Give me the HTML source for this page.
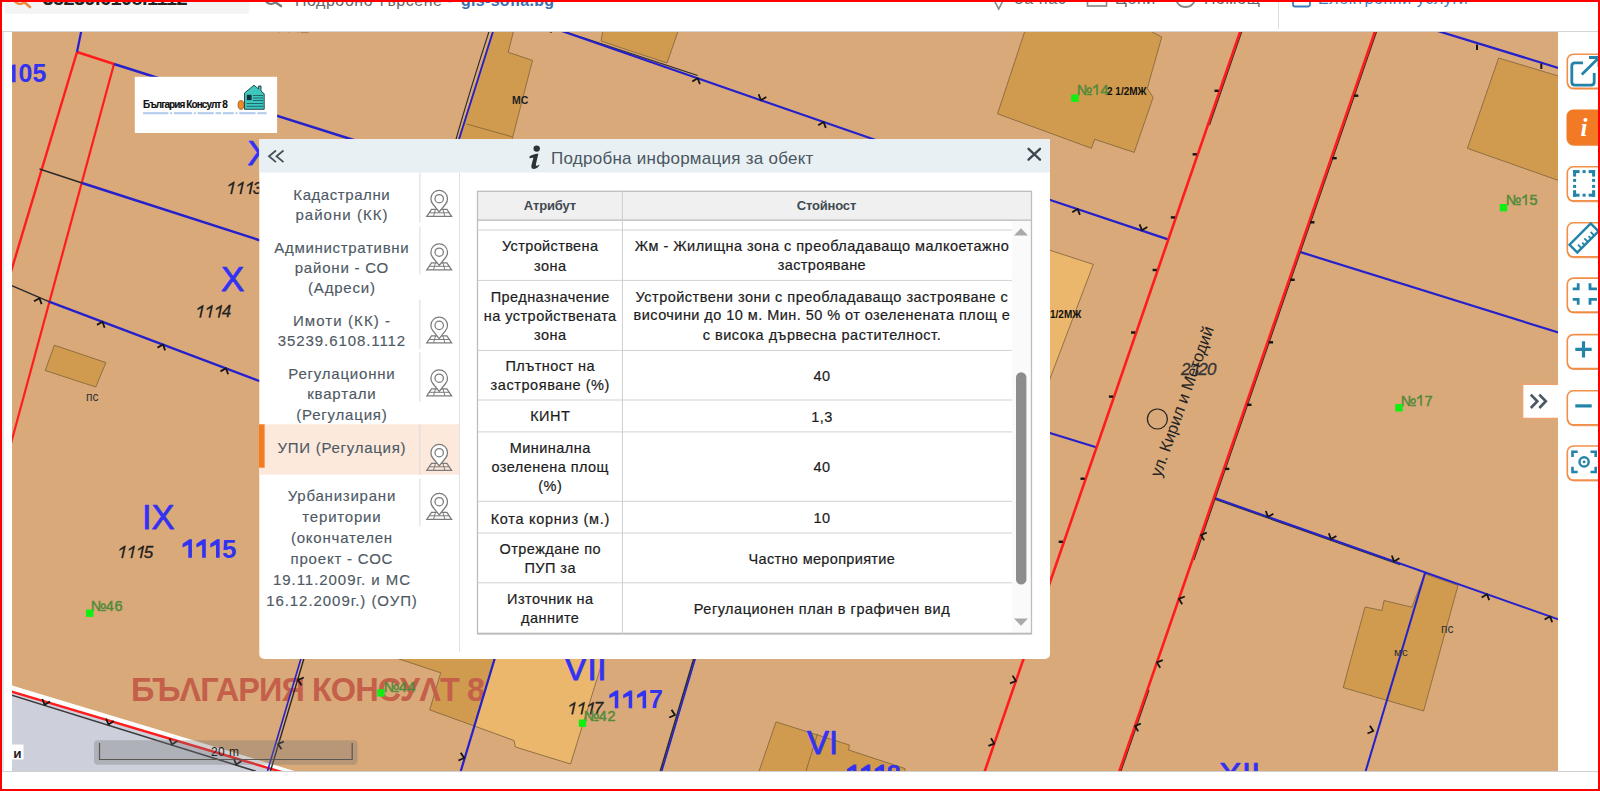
<!DOCTYPE html>
<html><head><meta charset="utf-8">
<style>
html,body{margin:0;padding:0;width:1600px;height:791px;overflow:hidden;background:#fff;font-family:"Liberation Sans",sans-serif;}
#frame{position:absolute;left:0;top:0;width:1596px;height:787px;border:2px solid #ff0000;z-index:100;pointer-events:none;}
#hdr{position:absolute;left:0;top:0;width:1600px;height:31px;background:#fff;border-bottom:1px solid #d6d6d6;overflow:hidden;}
#map{position:absolute;left:12px;top:32px;width:1546px;height:739px;overflow:hidden;background:#d9a97a;}
#map svg{position:absolute;left:0;top:0;}
#lstrip{position:absolute;left:2px;top:32px;width:1.5px;height:739px;background:#dfe8ea;}
#botline{position:absolute;left:2px;top:771px;width:1596px;height:1px;background:#d0d0d0;}
</style></head><body>
<div id="hdr"></div>
<div id="map"><svg width="1546" height="739" viewBox="12 32 1546 739">
<polygon points="0,681.8 306,774.5 0,774.5" fill="#ffffff"/>
<polygon points="0,688.1 290,774.5 0,774.5" fill="#cdcfdb"/>
<line x1="0.0" y1="688.1" x2="290.0" y2="774.5" stroke="#ff1c1c" stroke-width="2.4"/>
<line x1="0.0" y1="691.5" x2="256.0" y2="771.3" stroke="#3a3a3a" stroke-width="1.6"/>
<polyline points="42.3,699.0 44.7,704.8 50.0,701.4" fill="none" stroke="#151515" stroke-width="1.8" stroke-linejoin="round"/>
<polyline points="106.1,718.7 108.5,724.5 113.8,721.1" fill="none" stroke="#151515" stroke-width="1.8" stroke-linejoin="round"/>
<polyline points="169.6,738.7 172.0,744.5 177.3,741.1" fill="none" stroke="#151515" stroke-width="1.8" stroke-linejoin="round"/>
<polyline points="233.8,758.7 236.2,764.5 241.5,761.1" fill="none" stroke="#151515" stroke-width="1.8" stroke-linejoin="round"/>
<polygon points="54.4,345.2 105.9,362.6 95.8,387.0 45.2,370.5" fill="#d09b4e" stroke="#7d6237" stroke-width="0.8"/>
<polygon points="493.2,30.0 513.8,30.0 508.2,52.3 532.5,60.4 511.7,141.0 458.0,141.0" fill="#d09b4e" stroke="#7d6237" stroke-width="0.8"/>
<line x1="466.6" y1="124.0" x2="511.7" y2="136.7" stroke="#7d6237" stroke-width="0.8"/>
<polygon points="603.0,30.0 678.5,30.0 667.0,63.0 620.0,47.5 601.0,41.0" fill="#d09b4e" stroke="#7d6237" stroke-width="0.8"/>
<polygon points="1025.2,30.0 1148.1,30.0 1161.8,36.9 1147.3,88.3 1153.1,97.4 1134.2,152.4 1094.7,139.3 1091.5,148.3 997.5,113.8" fill="#d09b4e" stroke="#7d6237" stroke-width="0.8"/>
<polygon points="1498.6,58.0 1560.0,76.5 1560.0,181.0 1467.4,148.3" fill="#d09b4e" stroke="#7d6237" stroke-width="0.8"/>
<polygon points="1040.0,247.0 1093.3,264.4 1040.0,405.0" fill="#ebb76c" stroke="#7d6237" stroke-width="0.8"/>
<polygon points="1365.0,607.0 1382.0,610.5 1384.0,600.5 1412.0,607.2 1424.6,573.7 1458.0,585.4 1423.6,711.0 1343.2,687.6" fill="#d09b4e" stroke="#7d6237" stroke-width="0.8"/>
<polygon points="395.0,650.0 497.0,650.0 474.3,726.0 429.7,709.9 440.7,672.8 378.0,652.0" fill="#d09b4e" stroke="#7d6237" stroke-width="0.8"/>
<polygon points="497.0,650.0 606.0,650.0 570.5,764.0 515.4,747.0 514.0,740.5 474.3,726.0" fill="#ebb76c" stroke="#7d6237" stroke-width="0.8"/>
<polygon points="776.0,721.9 849.4,745.0 848.6,750.0 905.0,768.5 905.0,780.0 756.0,780.0" fill="#d09b4e" stroke="#7d6237" stroke-width="0.8"/>
<line x1="817.5" y1="733.8" x2="806.0" y2="771.0" stroke="#7d6237" stroke-width="0.8"/>
<text x="307.53" y="700.75" font-size="32.5" fill="#c4604a" letter-spacing="-0.932" text-anchor="middle" font-weight="bold" >БЪΛГАРИЯ КОНСУΛТ 8</text>
<line x1="77.0" y1="52.0" x2="10.0" y2="275.0" stroke="#ff1c1c" stroke-width="2.4"/>
<line x1="77.0" y1="52.0" x2="114.0" y2="64.0" stroke="#ff1c1c" stroke-width="2.6"/>
<line x1="114.0" y1="64.0" x2="10.0" y2="447.0" stroke="#ff1c1c" stroke-width="2.2"/>
<line x1="81.5" y1="30.0" x2="77.0" y2="52.0" stroke="#2420cc" stroke-width="2.2"/>
<line x1="114.0" y1="64.0" x2="360.0" y2="142.0" stroke="#2420cc" stroke-width="2.4"/>
<line x1="39.5" y1="169.0" x2="82.0" y2="183.0" stroke="#2a2a2a" stroke-width="1.4"/>
<line x1="82.0" y1="183.0" x2="262.0" y2="241.0" stroke="#2420cc" stroke-width="2.4"/>
<line x1="10.0" y1="285.0" x2="49.0" y2="301.6" stroke="#2a2a2a" stroke-width="1.4"/>
<line x1="49.0" y1="301.6" x2="262.0" y2="382.0" stroke="#2420cc" stroke-width="2.4"/>
<polyline points="41.6,304.1 39.5,298.2 34.0,301.3" fill="none" stroke="#151515" stroke-width="1.8" stroke-linejoin="round"/>
<polyline points="104.6,327.7 102.5,321.8 97.0,324.9" fill="none" stroke="#151515" stroke-width="1.8" stroke-linejoin="round"/>
<polyline points="165.1,350.4 163.0,344.5 157.5,347.6" fill="none" stroke="#151515" stroke-width="1.8" stroke-linejoin="round"/>
<polyline points="228.1,374.2 226.0,368.3 220.5,371.4" fill="none" stroke="#151515" stroke-width="1.8" stroke-linejoin="round"/>
<path d="M489.5,30 Q470,90 455.5,141" fill="none" stroke="#2a2a2a" stroke-width="1.1"/>
<line x1="493.5" y1="30.0" x2="458.5" y2="141.0" stroke="#2420cc" stroke-width="1.8"/>
<line x1="558.0" y1="29.5" x2="697.7" y2="75.5" stroke="#2a2a2a" stroke-width="1.2"/>
<line x1="556.0" y1="29.0" x2="880.0" y2="141.6" stroke="#2420cc" stroke-width="2.1"/>
<polyline points="699.9,84.1 697.7,78.3 692.3,81.5" fill="none" stroke="#151515" stroke-width="1.8" stroke-linejoin="round"/>
<polyline points="758.7,94.3 760.9,100.2 766.3,97.0" fill="none" stroke="#151515" stroke-width="1.8" stroke-linejoin="round"/>
<polyline points="825.8,127.9 823.6,122.0 818.2,125.2" fill="none" stroke="#151515" stroke-width="1.8" stroke-linejoin="round"/>
<circle cx="551.0" cy="31.5" r="1.3" fill="#151515"/>
<line x1="1434.5" y1="30.0" x2="1560.0" y2="68.4" stroke="#2420cc" stroke-width="2.2"/>
<path d="M1477,44.5 V50 M1541.3,63.5 V69" stroke="#151515" stroke-width="2"/>
<line x1="1045.0" y1="198.2" x2="1168.0" y2="239.4" stroke="#2420cc" stroke-width="2.2"/>
<polyline points="1079.9,214.8 1077.6,208.9 1072.2,212.2" fill="none" stroke="#151515" stroke-width="1.8" stroke-linejoin="round"/>
<polyline points="1139.6,224.3 1141.9,230.2 1147.3,226.9" fill="none" stroke="#151515" stroke-width="1.8" stroke-linejoin="round"/>
<line x1="1299.7" y1="251.9" x2="1560.0" y2="333.0" stroke="#2420cc" stroke-width="2.2"/>
<line x1="1045.0" y1="431.5" x2="1097.0" y2="447.5" stroke="#2420cc" stroke-width="2.2"/>
<line x1="1214.0" y1="499.0" x2="1400.0" y2="564.7" stroke="#2a2a2a" stroke-width="1.2"/>
<line x1="1214.0" y1="497.8" x2="1560.0" y2="620.0" stroke="#2420cc" stroke-width="2"/>
<polyline points="1265.8,511.0 1268.0,516.9 1273.4,513.7" fill="none" stroke="#151515" stroke-width="1.8" stroke-linejoin="round"/>
<polyline points="1328.8,533.2 1331.0,539.1 1336.4,535.9" fill="none" stroke="#151515" stroke-width="1.8" stroke-linejoin="round"/>
<polyline points="1391.8,555.5 1394.0,561.4 1399.4,558.2" fill="none" stroke="#151515" stroke-width="1.8" stroke-linejoin="round"/>
<polyline points="1489.2,600.1 1487.0,594.2 1481.6,597.4" fill="none" stroke="#151515" stroke-width="1.8" stroke-linejoin="round"/>
<polyline points="1552.2,622.3 1550.0,616.4 1544.6,619.6" fill="none" stroke="#151515" stroke-width="1.8" stroke-linejoin="round"/>
<line x1="1425.0" y1="573.0" x2="1363.0" y2="780.0" stroke="#2420cc" stroke-width="2"/>
<polyline points="1367.5,733.5 1373.3,731.0 1369.9,725.7" fill="none" stroke="#151515" stroke-width="1.8" stroke-linejoin="round"/>
<line x1="303.5" y1="650.0" x2="267.5" y2="771.0" stroke="#2420cc" stroke-width="1.6"/>
<line x1="306.5" y1="650.0" x2="270.5" y2="771.0" stroke="#2a2a2a" stroke-width="1.4"/>
<polyline points="303.8,677.5 298.0,680.0 301.5,685.3" fill="none" stroke="#151515" stroke-width="1.8" stroke-linejoin="round"/>
<polyline points="283.8,741.5 278.0,744.0 281.5,749.3" fill="none" stroke="#151515" stroke-width="1.8" stroke-linejoin="round"/>
<line x1="497.3" y1="650.0" x2="460.8" y2="771.0" stroke="#2420cc" stroke-width="2.2"/>
<polyline points="458.4,760.5 464.2,758.0 460.7,752.7" fill="none" stroke="#151515" stroke-width="1.8" stroke-linejoin="round"/>
<line x1="696.3" y1="650.0" x2="660.3" y2="771.0" stroke="#2a2a2a" stroke-width="1.5"/>
<line x1="697.8" y1="650.0" x2="661.8" y2="771.0" stroke="#2420cc" stroke-width="1.6"/>
<polyline points="669.2,717.5 675.0,715.0 671.5,709.7" fill="none" stroke="#151515" stroke-width="1.8" stroke-linejoin="round"/>
<line x1="1242.3" y1="30.0" x2="1209.5" y2="125.0" stroke="#2a2a2a" stroke-width="1.2"/>
<line x1="1240.7" y1="30.0" x2="981.7" y2="780.0" stroke="#ff1c1c" stroke-width="2.6"/>
<line x1="1377.1" y1="30.0" x2="1193.9" y2="560.0" stroke="#2a2a2a" stroke-width="1.2"/>
<line x1="1149.0" y1="690.0" x2="1117.9" y2="780.0" stroke="#2a2a2a" stroke-width="1.2"/>
<line x1="1375.5" y1="30.0" x2="1116.3" y2="780.0" stroke="#ff1c1c" stroke-width="2.6"/>
<line x1="1214.5" y1="90.8" x2="1218.7" y2="90.8" stroke="#151515" stroke-width="2.4"/>
<line x1="1192.6" y1="154.3" x2="1196.8" y2="154.3" stroke="#151515" stroke-width="2.4"/>
<line x1="1170.8" y1="217.4" x2="1175.0" y2="217.4" stroke="#151515" stroke-width="2.4"/>
<line x1="1152.6" y1="270.0" x2="1156.8" y2="270.0" stroke="#151515" stroke-width="2.4"/>
<line x1="1131.0" y1="332.5" x2="1135.2" y2="332.5" stroke="#151515" stroke-width="2.4"/>
<line x1="1108.9" y1="396.6" x2="1113.1" y2="396.6" stroke="#151515" stroke-width="2.4"/>
<line x1="1080.5" y1="478.7" x2="1084.7" y2="478.7" stroke="#151515" stroke-width="2.4"/>
<line x1="1058.7" y1="541.8" x2="1062.9" y2="541.8" stroke="#151515" stroke-width="2.4"/>
<line x1="1353.8" y1="95.7" x2="1358.3" y2="95.7" stroke="#151515" stroke-width="2.4"/>
<line x1="1332.2" y1="158.2" x2="1336.7" y2="158.2" stroke="#151515" stroke-width="2.4"/>
<line x1="1310.0" y1="222.3" x2="1314.5" y2="222.3" stroke="#151515" stroke-width="2.4"/>
<line x1="1290.2" y1="279.8" x2="1294.7" y2="279.8" stroke="#151515" stroke-width="2.4"/>
<line x1="1268.6" y1="342.3" x2="1273.1" y2="342.3" stroke="#151515" stroke-width="2.4"/>
<line x1="1247.0" y1="404.8" x2="1251.5" y2="404.8" stroke="#151515" stroke-width="2.4"/>
<line x1="1224.8" y1="468.9" x2="1229.3" y2="468.9" stroke="#151515" stroke-width="2.4"/>
<polyline points="1010.0,683.3 1015.9,681.0 1012.6,675.6" fill="none" stroke="#151515" stroke-width="1.8" stroke-linejoin="round"/>
<polyline points="988.4,745.9 994.2,743.6 991.0,738.2" fill="none" stroke="#151515" stroke-width="1.8" stroke-linejoin="round"/>
<polyline points="1206.8,532.7 1201.0,535.0 1204.2,540.4" fill="none" stroke="#151515" stroke-width="1.8" stroke-linejoin="round"/>
<polyline points="1184.8,596.5 1178.9,598.8 1182.2,604.2" fill="none" stroke="#151515" stroke-width="1.8" stroke-linejoin="round"/>
<polyline points="1162.8,660.1 1156.9,662.4 1160.2,667.8" fill="none" stroke="#151515" stroke-width="1.8" stroke-linejoin="round"/>
<polyline points="1140.8,723.7 1135.0,726.0 1138.2,731.4" fill="none" stroke="#151515" stroke-width="1.8" stroke-linejoin="round"/>
<circle cx="1157.4" cy="419" r="10" fill="none" stroke="#222" stroke-width="1.2"/>
<polygon points="1.70,82.30 -1.80,82.30 -1.80,69.80 -7.30,72.30 -7.30,68.80 -0.80,64.40 1.70,64.40" fill="#3232f2" stroke="#3232f2" stroke-width="0" stroke-linejoin="round"/>
<polygon points="15.60,82.30 12.10,82.30 12.10,69.80 6.60,72.30 6.60,68.80 13.10,64.40 15.60,64.40" fill="#3232f2" stroke="#3232f2" stroke-width="0" stroke-linejoin="round"/>
<text x="18.50" y="82.30" font-size="25" fill="#3232f2" stroke="#3232f2" stroke-width="0" font-weight="bold">0</text>
<text x="32.40" y="82.30" font-size="25" fill="#3232f2" stroke="#3232f2" stroke-width="0" font-weight="bold">5</text>
<text x="247.5" y="165.0" font-size="34.5" fill="#3232f2" stroke="#3232f2" stroke-width="0.75" stroke-linejoin="round">XI</text>
<text x="221.0" y="290.5" font-size="35" fill="#3232f2" stroke="#3232f2" stroke-width="0.75" stroke-linejoin="round">X</text>
<text x="142.0" y="528.7" font-size="34.5" fill="#3232f2" stroke="#3232f2" stroke-width="0.75" stroke-linejoin="round">IX</text>
<polygon points="191.94,557.80 188.30,557.80 188.30,544.80 182.58,547.40 182.58,543.76 189.34,539.18 191.94,539.18" fill="#3232f2" stroke="#3232f2" stroke-width="0" stroke-linejoin="round"/>
<polygon points="205.80,557.80 202.16,557.80 202.16,544.80 196.44,547.40 196.44,543.76 203.20,539.18 205.80,539.18" fill="#3232f2" stroke="#3232f2" stroke-width="0" stroke-linejoin="round"/>
<polygon points="219.65,557.80 216.01,557.80 216.01,544.80 210.29,547.40 210.29,543.76 217.05,539.18 219.65,539.18" fill="#3232f2" stroke="#3232f2" stroke-width="0" stroke-linejoin="round"/>
<text x="222.07" y="557.80" font-size="26" fill="#3232f2" stroke="#3232f2" stroke-width="0" font-weight="bold">5</text>
<text x="564.0" y="680.0" font-size="35" fill="#3232f2" stroke="#3232f2" stroke-width="0.75" stroke-linejoin="round">VII</text>
<polygon points="618.30,708.30 614.80,708.30 614.80,695.80 609.30,698.30 609.30,694.80 615.80,690.40 618.30,690.40" fill="#3232f2" stroke="#3232f2" stroke-width="0" stroke-linejoin="round"/>
<polygon points="632.20,708.30 628.70,708.30 628.70,695.80 623.20,698.30 623.20,694.80 629.70,690.40 632.20,690.40" fill="#3232f2" stroke="#3232f2" stroke-width="0" stroke-linejoin="round"/>
<polygon points="646.10,708.30 642.60,708.30 642.60,695.80 637.10,698.30 637.10,694.80 643.60,690.40 646.10,690.40" fill="#3232f2" stroke="#3232f2" stroke-width="0" stroke-linejoin="round"/>
<text x="649.00" y="708.30" font-size="25" fill="#3232f2" stroke="#3232f2" stroke-width="0" font-weight="bold">7</text>
<text x="807.0" y="753.6" font-size="33" fill="#3232f2" stroke="#3232f2" stroke-width="0.75" stroke-linejoin="round">VI</text>
<polygon points="856.44,783.00 852.80,783.00 852.80,770.00 847.08,772.60 847.08,768.96 853.84,764.38 856.44,764.38" fill="#3232f2" stroke="#3232f2" stroke-width="0" stroke-linejoin="round"/>
<polygon points="870.30,783.00 866.66,783.00 866.66,770.00 860.94,772.60 860.94,768.96 867.70,764.38 870.30,764.38" fill="#3232f2" stroke="#3232f2" stroke-width="0" stroke-linejoin="round"/>
<polygon points="884.15,783.00 880.51,783.00 880.51,770.00 874.79,772.60 874.79,768.96 881.55,764.38 884.15,764.38" fill="#3232f2" stroke="#3232f2" stroke-width="0" stroke-linejoin="round"/>
<text x="886.57" y="783.00" font-size="26" fill="#3232f2" stroke="#3232f2" stroke-width="0" font-weight="bold">8</text>
<text x="1219.0" y="786.0" font-size="34" fill="#3232f2" stroke="#3232f2" stroke-width="0.75" stroke-linejoin="round">XII</text>
<polygon points="232.00,194.00 230.47,194.00 232.50,184.48 228.46,186.52 228.80,184.91 233.71,181.83 234.59,181.83" fill="#222" stroke="#222" stroke-width="0.3" stroke-linejoin="round"/>
<polygon points="241.26,194.00 239.73,194.00 241.75,184.48 237.71,186.52 238.06,184.91 242.96,181.83 243.84,181.83" fill="#222" stroke="#222" stroke-width="0.3" stroke-linejoin="round"/>
<polygon points="250.51,194.00 248.98,194.00 251.00,184.48 246.96,186.52 247.31,184.91 252.21,181.83 253.10,181.83" fill="#222" stroke="#222" stroke-width="0.3" stroke-linejoin="round"/>
<text x="252.76" y="194.00" font-size="17" fill="#222" stroke="#222" stroke-width="0.3" font-style="italic">3</text>
<polygon points="201.00,317.40 199.47,317.40 201.50,307.88 197.46,309.92 197.80,308.30 202.71,305.23 203.59,305.23" fill="#222" stroke="#222" stroke-width="0.3" stroke-linejoin="round"/>
<polygon points="210.26,317.40 208.73,317.40 210.75,307.88 206.71,309.92 207.06,308.30 211.96,305.23 212.84,305.23" fill="#222" stroke="#222" stroke-width="0.3" stroke-linejoin="round"/>
<polygon points="219.51,317.40 217.98,317.40 220.00,307.88 215.96,309.92 216.31,308.30 221.21,305.23 222.10,305.23" fill="#222" stroke="#222" stroke-width="0.3" stroke-linejoin="round"/>
<text x="221.76" y="317.40" font-size="17" fill="#222" stroke="#222" stroke-width="0.3" font-style="italic">4</text>
<polygon points="123.00,558.00 121.47,558.00 123.50,548.48 119.46,550.52 119.80,548.90 124.71,545.83 125.59,545.83" fill="#222" stroke="#222" stroke-width="0.3" stroke-linejoin="round"/>
<polygon points="132.26,558.00 130.73,558.00 132.75,548.48 128.71,550.52 129.06,548.90 133.96,545.83 134.84,545.83" fill="#222" stroke="#222" stroke-width="0.3" stroke-linejoin="round"/>
<polygon points="141.51,558.00 139.98,558.00 142.00,548.48 137.96,550.52 138.31,548.90 143.21,545.83 144.10,545.83" fill="#222" stroke="#222" stroke-width="0.3" stroke-linejoin="round"/>
<text x="143.76" y="558.00" font-size="17" fill="#222" stroke="#222" stroke-width="0.3" font-style="italic">5</text>
<polygon points="573.00,714.30 571.47,714.30 573.50,704.78 569.46,706.82 569.80,705.20 574.71,702.13 575.59,702.13" fill="#222" stroke="#222" stroke-width="0.3" stroke-linejoin="round"/>
<polygon points="582.26,714.30 580.73,714.30 582.75,704.78 578.71,706.82 579.06,705.20 583.96,702.13 584.84,702.13" fill="#222" stroke="#222" stroke-width="0.3" stroke-linejoin="round"/>
<polygon points="591.51,714.30 589.98,714.30 592.00,704.78 587.96,706.82 588.31,705.20 593.21,702.13 594.10,702.13" fill="#222" stroke="#222" stroke-width="0.3" stroke-linejoin="round"/>
<text x="593.76" y="714.30" font-size="17" fill="#222" stroke="#222" stroke-width="0.3" font-style="italic">7</text>
<polygon points="280.00,32.00 278.47,32.00 280.50,22.48 276.46,24.52 276.80,22.91 281.71,19.83 282.59,19.83" fill="#222" stroke="#222" stroke-width="0.3" stroke-linejoin="round"/>
<polygon points="289.26,32.00 287.73,32.00 289.75,22.48 285.71,24.52 286.06,22.91 290.96,19.83 291.84,19.83" fill="#222" stroke="#222" stroke-width="0.3" stroke-linejoin="round"/>
<polygon points="298.51,32.00 296.98,32.00 299.00,22.48 294.96,24.52 295.31,22.91 300.21,19.83 301.10,19.83" fill="#222" stroke="#222" stroke-width="0.3" stroke-linejoin="round"/>
<text x="300.76" y="32.00" font-size="17" fill="#222" stroke="#222" stroke-width="0.3" font-style="italic">2</text>
<text x="1181.00" y="375.00" font-size="17" fill="#333" stroke="#333" stroke-width="0.3" font-style="italic">2</text>
<polygon points="1196.66,375.00 1195.13,375.00 1197.15,365.48 1193.11,367.52 1193.46,365.90 1198.36,362.83 1199.24,362.83" fill="#333" stroke="#333" stroke-width="0.3" stroke-linejoin="round"/>
<text x="1198.30" y="375.00" font-size="17" fill="#333" stroke="#333" stroke-width="0.3" font-style="italic">2</text>
<text x="1206.96" y="375.00" font-size="17" fill="#333" stroke="#333" stroke-width="0.3" font-style="italic">0</text>
<text x="86.0" y="401.0" font-size="12" fill="#333" >пс</text>
<text x="512.0" y="104.3" font-size="10.5" fill="#222" font-weight="bold">MC</text>
<text x="1441.0" y="633.3" font-size="12" fill="#333" >пс</text>
<text x="1394.0" y="655.7" font-size="11.5" fill="#333" >мс</text>
<text x="1107.0" y="95.0" font-size="10" fill="#111" font-weight="bold">2 1/2МЖ</text>
<text x="1050.0" y="318.2" font-size="10" fill="#111" font-weight="bold">1/2МЖ</text>
<text x="91.0" y="610.5" font-size="14.5" fill="#52893a" stroke="#52893a" stroke-width="0.45">№</text>
<text x="105.81" y="610.50" font-size="14.5" fill="#52893a" stroke="#52893a" stroke-width="0.45">4</text>
<text x="114.47" y="610.50" font-size="14.5" fill="#52893a" stroke="#52893a" stroke-width="0.45">6</text>
<rect x="86.0" y="609.5" width="7.4" height="7.4" fill="#11ee11"/>
<text x="1077.0" y="94.8" font-size="14.5" fill="#52893a" stroke="#52893a" stroke-width="0.45">№</text>
<polygon points="1097.78,94.80 1096.48,94.80 1096.48,86.68 1093.40,88.42 1093.40,87.04 1097.03,84.42 1097.78,84.42" fill="#52893a" stroke="#52893a" stroke-width="0.45" stroke-linejoin="round"/>
<text x="1100.47" y="94.80" font-size="14.5" fill="#52893a" stroke="#52893a" stroke-width="0.45">4</text>
<rect x="1071.2" y="94.5" width="7.4" height="7.4" fill="#11ee11"/>
<text x="1506.0" y="205.0" font-size="14.5" fill="#52893a" stroke="#52893a" stroke-width="0.45">№</text>
<polygon points="1526.78,205.00 1525.48,205.00 1525.48,196.88 1522.40,198.62 1522.40,197.24 1526.03,194.62 1526.78,194.62" fill="#52893a" stroke="#52893a" stroke-width="0.45" stroke-linejoin="round"/>
<text x="1529.47" y="205.00" font-size="14.5" fill="#52893a" stroke="#52893a" stroke-width="0.45">5</text>
<rect x="1499.8" y="204.0" width="7.4" height="7.4" fill="#11ee11"/>
<text x="1401.0" y="405.5" font-size="14.5" fill="#52893a" stroke="#52893a" stroke-width="0.45">№</text>
<polygon points="1421.78,405.50 1420.48,405.50 1420.48,397.38 1417.40,399.12 1417.40,397.74 1421.03,395.12 1421.78,395.12" fill="#52893a" stroke="#52893a" stroke-width="0.45" stroke-linejoin="round"/>
<text x="1424.47" y="405.50" font-size="14.5" fill="#52893a" stroke="#52893a" stroke-width="0.45">7</text>
<rect x="1395.3" y="404.1" width="7.4" height="7.4" fill="#11ee11"/>
<text x="584.0" y="720.5" font-size="14.5" fill="#52893a" stroke="#52893a" stroke-width="0.45">№</text>
<text x="598.81" y="720.50" font-size="14.5" fill="#52893a" stroke="#52893a" stroke-width="0.45">4</text>
<text x="607.47" y="720.50" font-size="14.5" fill="#52893a" stroke="#52893a" stroke-width="0.45">2</text>
<rect x="578.8" y="719.5" width="7.4" height="7.4" fill="#11ee11"/>
<text x="384.0" y="692.0" font-size="14.5" fill="#52893a" stroke="#52893a" stroke-width="0.45">№</text>
<text x="398.81" y="692.00" font-size="14.5" fill="#52893a" stroke="#52893a" stroke-width="0.45">4</text>
<text x="407.47" y="692.00" font-size="14.5" fill="#52893a" stroke="#52893a" stroke-width="0.45">4</text>
<rect x="377.2" y="689.2" width="7.4" height="7.4" fill="#11ee11"/>
<text x="0" y="0" font-size="16.5" fill="#222" letter-spacing="0" transform="translate(1160.5,478) rotate(-70.3)">ул. Кирил и Методий</text>

<rect x="94" y="740.3" width="263.5" height="24.5" rx="4" fill="#737373" fill-opacity="0.33"/>
<path d="M99.5,743 V759.5 H352.2 V743" fill="none" stroke="#5a5652" stroke-width="1.2"/>
<text x="225.23" y="755.50" font-size="12" fill="#222" letter-spacing="0.453" text-anchor="middle" >20 m</text>
<rect x="12" y="744.5" width="11.5" height="15" fill="#ffffff"/>
<text x="17.50" y="757.50" font-size="13.5" fill="#222" letter-spacing="0.000" text-anchor="middle" font-weight="bold" >и</text>
<rect x="134.8" y="76.8" width="142.3" height="56.2" fill="#ffffff"/>
<text x="185.04" y="108.00" font-size="10" fill="#111111" letter-spacing="-0.912" text-anchor="middle" font-weight="bold" stroke="#111" stroke-width="0.15">България Консулт 8</text>
<rect x="143.0" y="112.2" width="25.4" height="2" fill="#7aa6dc" opacity="0.6"/><rect x="170.2" y="112.2" width="1.8" height="2" fill="#7aa6dc" opacity="0.6"/><rect x="173.9" y="112.2" width="18.2" height="2" fill="#7aa6dc" opacity="0.6"/><rect x="193.9" y="112.2" width="1.8" height="2" fill="#7aa6dc" opacity="0.6"/><rect x="197.5" y="112.2" width="16.3" height="2" fill="#7aa6dc" opacity="0.6"/><rect x="215.6" y="112.2" width="5.4" height="2" fill="#7aa6dc" opacity="0.6"/><rect x="222.9" y="112.2" width="10.9" height="2" fill="#7aa6dc" opacity="0.6"/><rect x="235.6" y="112.2" width="1.8" height="2" fill="#7aa6dc" opacity="0.6"/><rect x="239.3" y="112.2" width="16.3" height="2" fill="#7aa6dc" opacity="0.6"/><rect x="257.4" y="112.2" width="9.1" height="2" fill="#7aa6dc" opacity="0.6"/>
<path d="M244.5,109.3 V93 L254,85.2 L258.6,89 V86 H261 V91 L264.2,93.8 V109.3 Z" fill="#3cc6bd" stroke="#1c3a3c" stroke-width="0.9"/>
<rect x="246.8" y="94.8" width="4.8" height="5.3" fill="#12303a"/>
<path d="M253,95.5 H263 M253,98 H263 M253,100.5 H263 M246.5,103.5 H263 M246.5,106.3 H263" stroke="#1f5f60" stroke-width="0.9"/>
<ellipse cx="241" cy="105" rx="3" ry="4.4" fill="#f08a28" stroke="#6a3a10" stroke-width="0.6"/>
</svg></div>
<div id="botline"></div><div id="lstrip"></div>
<svg id="ov" width="1600" height="791" viewBox="0 0 1600 791" style="position:absolute;left:0;top:0;">
<rect x="4.5" y="0" width="245" height="14" rx="3" fill="#f4f4f4"/>
<circle cx="20" cy="-2" r="6" fill="none" stroke="#f0893a" stroke-width="2.4"/>
<line x1="24" y1="2" x2="30" y2="7" stroke="#f0893a" stroke-width="2.6" stroke-linecap="round"/>
<text x="114.70" y="5.00" font-size="20" fill="#222" letter-spacing="-0.600" text-anchor="middle" font-weight="bold" >35239.6108.1112</text>
<circle cx="271" cy="-2" r="6" fill="none" stroke="#777" stroke-width="2.2"/>
<line x1="275" y1="2" x2="281" y2="6" stroke="#777" stroke-width="2.4" stroke-linecap="round"/>
<text x="295.00" y="5.50" font-size="16" fill="#666" letter-spacing="0.500" text-anchor="start" >Подробно търсене - </text>
<text x="461.00" y="5.50" font-size="16" fill="#3b6fb0" letter-spacing="0.300" text-anchor="start" font-weight="bold" >gis-sofia.bg</text>
<path d="M993,-2 L998.7,9 L1004.4,-2" fill="none" stroke="#888" stroke-width="1.6"/>
<text x="1014.00" y="4.00" font-size="16" fill="#666" letter-spacing="0.600" text-anchor="start" >За нас</text>
<rect x="1087.5" y="-8" width="19" height="14" fill="none" stroke="#888" stroke-width="1.6"/>
<text x="1115.00" y="4.00" font-size="16" fill="#666" letter-spacing="0.600" text-anchor="start" >Цени</text>
<circle cx="1185.5" cy="-3" r="10" fill="none" stroke="#888" stroke-width="1.8"/>
<text x="1204.00" y="4.00" font-size="16" fill="#666" letter-spacing="0.600" text-anchor="start" >Помощ</text>
<line x1="1278.5" y1="0" x2="1278.5" y2="29" stroke="#dddddd" stroke-width="1"/>
<rect x="1293" y="-10" width="17" height="16.5" rx="2" fill="none" stroke="#3b7fc0" stroke-width="1.8"/>
<text x="1318.00" y="4.00" font-size="16" fill="#3b7fc0" letter-spacing="0.600" text-anchor="start" >Електронни услуги</text>
<path d="M259.3,139.2 H1050 V654 A5,5 0 0 1 1045,659 H264.3 A5,5 0 0 1 259.3,654 Z" fill="#ffffff"/>
<rect x="259.3" y="139.2" width="790.7" height="33.3" fill="#e9f0f4"/>
<path d="M276,150.5 L269,156.3 L276,162.1 M283.5,150.5 L276.5,156.3 L283.5,162.1" fill="none" stroke="#465259" stroke-width="1.8"/>
<circle cx="536.7" cy="148.6" r="3.2" fill="#2b3338"/>
<path d="M529.5,156.6 Q532,154.4 538.4,153.5 L535.9,164.3 Q535.5,166.2 537.2,165.7 L539.7,164.6 Q537.6,168.9 534,168.9 Q530.6,168.7 531.5,164.9 L533.4,157.8 Q531.8,157.6 529.5,158.2 Z" fill="#2b3338"/>
<text x="682.33" y="163.75" font-size="17" fill="#4a5660" letter-spacing="0.261" text-anchor="middle" >Подробна информация за обект</text>
<path d="M1028.5,148.8 L1040,159.7 M1040,148.8 L1028.5,159.7" stroke="#3c4850" stroke-width="2.3" stroke-linecap="round"/>
<rect x="259" y="424.3" width="200.4" height="50.4" fill="#fde9dc"/>
<rect x="259" y="424.3" width="5.6" height="43.4" fill="#f47b20"/>
<rect x="419.3" y="172.6" width="1.1" height="49.8" fill="#dcdcdc"/>
<rect x="419.3" y="226.5" width="1.1" height="47.8" fill="#dcdcdc"/>
<rect x="419.3" y="299.6" width="1.1" height="49.2" fill="#dcdcdc"/>
<rect x="419.3" y="352.0" width="1.1" height="49.6" fill="#dcdcdc"/>
<rect x="419.3" y="424.3" width="1.1" height="50.4" fill="#dcdcdc"/>
<rect x="419.3" y="478.5" width="1.1" height="47.4" fill="#dcdcdc"/>
<rect x="459" y="172.6" width="1" height="479.4" fill="#e2e2e2"/>
<g transform="translate(426.0,189.7)" fill="none" stroke="#7b7b7b" stroke-width="1.25"><path d="M5.5,19.6 H20.9 L25.6,26.6 H0.8 Z" /><path d="M3.2,23.1 H23.2 M9.5,19.6 L7.5,26.6 M16.9,19.6 L18.9,26.6" stroke-width="1"/><path d="M13.2,22.2 L6.8,14.3 A8.3,8.3 0 1 1 19.6,14.3 Z" fill="#ffffff"/><circle cx="13.2" cy="9" r="4.2"/></g>
<g transform="translate(426.0,243.2)" fill="none" stroke="#7b7b7b" stroke-width="1.25"><path d="M5.5,19.6 H20.9 L25.6,26.6 H0.8 Z" /><path d="M3.2,23.1 H23.2 M9.5,19.6 L7.5,26.6 M16.9,19.6 L18.9,26.6" stroke-width="1"/><path d="M13.2,22.2 L6.8,14.3 A8.3,8.3 0 1 1 19.6,14.3 Z" fill="#ffffff"/><circle cx="13.2" cy="9" r="4.2"/></g>
<g transform="translate(426.0,316.4)" fill="none" stroke="#7b7b7b" stroke-width="1.25"><path d="M5.5,19.6 H20.9 L25.6,26.6 H0.8 Z" /><path d="M3.2,23.1 H23.2 M9.5,19.6 L7.5,26.6 M16.9,19.6 L18.9,26.6" stroke-width="1"/><path d="M13.2,22.2 L6.8,14.3 A8.3,8.3 0 1 1 19.6,14.3 Z" fill="#ffffff"/><circle cx="13.2" cy="9" r="4.2"/></g>
<g transform="translate(426.0,369.2)" fill="none" stroke="#7b7b7b" stroke-width="1.25"><path d="M5.5,19.6 H20.9 L25.6,26.6 H0.8 Z" /><path d="M3.2,23.1 H23.2 M9.5,19.6 L7.5,26.6 M16.9,19.6 L18.9,26.6" stroke-width="1"/><path d="M13.2,22.2 L6.8,14.3 A8.3,8.3 0 1 1 19.6,14.3 Z" fill="#ffffff"/><circle cx="13.2" cy="9" r="4.2"/></g>
<g transform="translate(426.0,443.7)" fill="none" stroke="#7b7b7b" stroke-width="1.25"><path d="M5.5,19.6 H20.9 L25.6,26.6 H0.8 Z" /><path d="M3.2,23.1 H23.2 M9.5,19.6 L7.5,26.6 M16.9,19.6 L18.9,26.6" stroke-width="1"/><path d="M13.2,22.2 L6.8,14.3 A8.3,8.3 0 1 1 19.6,14.3 Z" fill="#ffffff"/><circle cx="13.2" cy="9" r="4.2"/></g>
<g transform="translate(426.0,492.7)" fill="none" stroke="#7b7b7b" stroke-width="1.25"><path d="M5.5,19.6 H20.9 L25.6,26.6 H0.8 Z" /><path d="M3.2,23.1 H23.2 M9.5,19.6 L7.5,26.6 M16.9,19.6 L18.9,26.6" stroke-width="1"/><path d="M13.2,22.2 L6.8,14.3 A8.3,8.3 0 1 1 19.6,14.3 Z" fill="#ffffff"/><circle cx="13.2" cy="9" r="4.2"/></g>
<text x="341.78" y="200.00" font-size="15" fill="#4e5964" letter-spacing="0.560" text-anchor="middle" stroke="#4e5964" stroke-width="0.15">Кадастрални</text>
<text x="342.02" y="220.40" font-size="15" fill="#4e5964" letter-spacing="1.045" text-anchor="middle" stroke="#4e5964" stroke-width="0.15">райони (КК)</text>
<text x="341.84" y="252.50" font-size="15" fill="#4e5964" letter-spacing="0.689" text-anchor="middle" stroke="#4e5964" stroke-width="0.15">Административни</text>
<text x="341.90" y="273.30" font-size="15" fill="#4e5964" letter-spacing="0.800" text-anchor="middle" stroke="#4e5964" stroke-width="0.15">райони - СО</text>
<text x="341.90" y="292.60" font-size="15" fill="#4e5964" letter-spacing="0.800" text-anchor="middle" stroke="#4e5964" stroke-width="0.15">(Адреси)</text>
<text x="342.05" y="326.00" font-size="15" fill="#4e5964" letter-spacing="1.091" text-anchor="middle" stroke="#4e5964" stroke-width="0.15">Имоти (КК) -</text>
<text x="341.95" y="346.40" font-size="15" fill="#4e5964" letter-spacing="0.907" text-anchor="middle" stroke="#4e5964" stroke-width="0.15">35239.6108.1112</text>
<text x="341.90" y="378.80" font-size="15" fill="#4e5964" letter-spacing="0.800" text-anchor="middle" stroke="#4e5964" stroke-width="0.15">Регулационни</text>
<text x="341.90" y="399.20" font-size="15" fill="#4e5964" letter-spacing="0.800" text-anchor="middle" stroke="#4e5964" stroke-width="0.15">квартали</text>
<text x="341.90" y="419.70" font-size="15" fill="#4e5964" letter-spacing="0.800" text-anchor="middle" stroke="#4e5964" stroke-width="0.15">(Регулация)</text>
<text x="341.87" y="453.30" font-size="15" fill="#4e5964" letter-spacing="0.732" text-anchor="middle" stroke="#4e5964" stroke-width="0.15">УПИ (Регулация)</text>
<text x="341.89" y="501.30" font-size="15" fill="#4e5964" letter-spacing="0.773" text-anchor="middle" stroke="#4e5964" stroke-width="0.15">Урбанизирани</text>
<text x="341.90" y="522.00" font-size="15" fill="#4e5964" letter-spacing="0.800" text-anchor="middle" stroke="#4e5964" stroke-width="0.15">територии</text>
<text x="341.90" y="543.00" font-size="15" fill="#4e5964" letter-spacing="0.800" text-anchor="middle" stroke="#4e5964" stroke-width="0.15">(окончателен</text>
<text x="341.90" y="563.80" font-size="15" fill="#4e5964" letter-spacing="0.800" text-anchor="middle" stroke="#4e5964" stroke-width="0.15">проект - СОС</text>
<text x="341.98" y="584.70" font-size="15" fill="#4e5964" letter-spacing="0.956" text-anchor="middle" stroke="#4e5964" stroke-width="0.15">19.11.2009г. и МС</text>
<text x="341.97" y="605.50" font-size="15" fill="#4e5964" letter-spacing="0.947" text-anchor="middle" stroke="#4e5964" stroke-width="0.15">16.12.2009г.) (ОУП)</text>
<rect x="477.5" y="191.3" width="554.0" height="28.5" fill="#f0f0f0"/>
<rect x="1012" y="219.8" width="19.5" height="414.1" fill="#fafafa"/>
<rect x="477.5" y="229.5" width="534.5" height="1" fill="#d2d2d2"/>
<rect x="477.5" y="279.9" width="534.5" height="1" fill="#d2d2d2"/>
<rect x="477.5" y="349.9" width="534.5" height="1" fill="#d2d2d2"/>
<rect x="477.5" y="399.5" width="534.5" height="1" fill="#d2d2d2"/>
<rect x="477.5" y="431.4" width="534.5" height="1" fill="#d2d2d2"/>
<rect x="477.5" y="500.8" width="534.5" height="1" fill="#d2d2d2"/>
<rect x="477.5" y="532.5" width="534.5" height="1" fill="#d2d2d2"/>
<rect x="477.5" y="582.3" width="534.5" height="1" fill="#d2d2d2"/>
<rect x="477.5" y="219.4" width="554.0" height="1.5" fill="#c2c2c2"/>
<rect x="477.5" y="632.7" width="554.0" height="1.6" fill="#b8b8b8"/>
<rect x="477.5" y="191.3" width="554.0" height="442.6" fill="none" stroke="#bdbdbd" stroke-width="1.3"/>
<rect x="621.9" y="191.3" width="1" height="442.6" fill="#cfcfcf"/>
<path d="M1014,235.5 L1021,228.2 L1028,235.5 Z" fill="#a9a9a9"/>
<rect x="1016" y="372.3" width="10.4" height="212.3" rx="5.2" fill="#8d8d8d"/>
<path d="M1014,618.5 L1021,625.8 L1028,618.5 Z" fill="#a9a9a9"/>
<text x="549.93" y="210.30" font-size="13" fill="#3f4a52" letter-spacing="-0.145" text-anchor="middle" font-weight="bold" >Атрибут</text>
<text x="826.41" y="210.30" font-size="13" fill="#3f4a52" letter-spacing="-0.173" text-anchor="middle" font-weight="bold" >Стойност</text>
<clipPath id="tclip"><rect x="477" y="220" width="535" height="413"/></clipPath><g clip-path="url(#tclip)">
<text x="550.18" y="251.10" font-size="14.5" fill="#1c1c1c" letter-spacing="0.370" text-anchor="middle" stroke="#1c1c1c" stroke-width="0.2">Устройствена</text>
<text x="550.23" y="270.50" font-size="14.5" fill="#1c1c1c" letter-spacing="0.450" text-anchor="middle" stroke="#1c1c1c" stroke-width="0.2">зона</text>
<text x="550.23" y="301.60" font-size="14.5" fill="#1c1c1c" letter-spacing="0.450" text-anchor="middle" stroke="#1c1c1c" stroke-width="0.2">Предназначение</text>
<text x="550.23" y="320.60" font-size="14.5" fill="#1c1c1c" letter-spacing="0.450" text-anchor="middle" stroke="#1c1c1c" stroke-width="0.2">на устройствената</text>
<text x="550.23" y="339.90" font-size="14.5" fill="#1c1c1c" letter-spacing="0.450" text-anchor="middle" stroke="#1c1c1c" stroke-width="0.2">зона</text>
<text x="550.23" y="371.30" font-size="14.5" fill="#1c1c1c" letter-spacing="0.450" text-anchor="middle" stroke="#1c1c1c" stroke-width="0.2">Плътност на</text>
<text x="550.28" y="390.20" font-size="14.5" fill="#1c1c1c" letter-spacing="0.566" text-anchor="middle" stroke="#1c1c1c" stroke-width="0.2">застрояване (%)</text>
<text x="550.23" y="421.40" font-size="14.5" fill="#1c1c1c" letter-spacing="0.450" text-anchor="middle" stroke="#1c1c1c" stroke-width="0.2">КИНТ</text>
<text x="550.23" y="453.20" font-size="14.5" fill="#1c1c1c" letter-spacing="0.450" text-anchor="middle" stroke="#1c1c1c" stroke-width="0.2">Мининална</text>
<text x="550.23" y="472.10" font-size="14.5" fill="#1c1c1c" letter-spacing="0.450" text-anchor="middle" stroke="#1c1c1c" stroke-width="0.2">озеленена площ</text>
<text x="550.23" y="491.20" font-size="14.5" fill="#1c1c1c" letter-spacing="0.450" text-anchor="middle" stroke="#1c1c1c" stroke-width="0.2">(%)</text>
<text x="550.36" y="523.60" font-size="14.5" fill="#1c1c1c" letter-spacing="0.721" text-anchor="middle" stroke="#1c1c1c" stroke-width="0.2">Кота корниз (м.)</text>
<text x="550.23" y="553.90" font-size="14.5" fill="#1c1c1c" letter-spacing="0.450" text-anchor="middle" stroke="#1c1c1c" stroke-width="0.2">Отреждане по</text>
<text x="550.23" y="573.00" font-size="14.5" fill="#1c1c1c" letter-spacing="0.450" text-anchor="middle" stroke="#1c1c1c" stroke-width="0.2">ПУП за</text>
<text x="550.23" y="604.40" font-size="14.5" fill="#1c1c1c" letter-spacing="0.450" text-anchor="middle" stroke="#1c1c1c" stroke-width="0.2">Източник на</text>
<text x="550.23" y="623.00" font-size="14.5" fill="#1c1c1c" letter-spacing="0.450" text-anchor="middle" stroke="#1c1c1c" stroke-width="0.2">данните</text>
<text x="821.94" y="250.60" font-size="14.5" fill="#1c1c1c" letter-spacing="0.471" text-anchor="middle" stroke="#1c1c1c" stroke-width="0.2">Жм - Жилищна зона с преобладаващо малкоетажно</text>
<text x="821.88" y="270.20" font-size="14.5" fill="#1c1c1c" letter-spacing="0.366" text-anchor="middle" stroke="#1c1c1c" stroke-width="0.2">застрояване</text>
<text x="821.95" y="301.60" font-size="14.5" fill="#1c1c1c" letter-spacing="0.490" text-anchor="middle" stroke="#1c1c1c" stroke-width="0.2">Устройствени зони с преобладаващо застрояване с</text>
<text x="821.93" y="320.10" font-size="14.5" fill="#1c1c1c" letter-spacing="0.450" text-anchor="middle" stroke="#1c1c1c" stroke-width="0.2">височини до 10 м. Мин. 50 % от озеленената площ е</text>
<text x="821.96" y="339.80" font-size="14.5" fill="#1c1c1c" letter-spacing="0.514" text-anchor="middle" stroke="#1c1c1c" stroke-width="0.2">с висока дървесна растителност.</text>
<text x="821.93" y="381.10" font-size="14.5" fill="#1c1c1c" letter-spacing="0.450" text-anchor="middle" stroke="#1c1c1c" stroke-width="0.2">40</text>
<text x="821.93" y="421.60" font-size="14.5" fill="#1c1c1c" letter-spacing="0.450" text-anchor="middle" stroke="#1c1c1c" stroke-width="0.2">1,3</text>
<text x="821.93" y="472.10" font-size="14.5" fill="#1c1c1c" letter-spacing="0.450" text-anchor="middle" stroke="#1c1c1c" stroke-width="0.2">40</text>
<text x="821.93" y="522.90" font-size="14.5" fill="#1c1c1c" letter-spacing="0.450" text-anchor="middle" stroke="#1c1c1c" stroke-width="0.2">10</text>
<text x="821.87" y="563.90" font-size="14.5" fill="#1c1c1c" letter-spacing="0.335" text-anchor="middle" stroke="#1c1c1c" stroke-width="0.2">Частно мероприятие</text>
<text x="821.96" y="614.40" font-size="14.5" fill="#1c1c1c" letter-spacing="0.514" text-anchor="middle" stroke="#1c1c1c" stroke-width="0.2">Регулационен план в графичен вид</text>
</g>
<rect x="1567.3" y="54.3" width="36" height="34" rx="6" fill="#ffffff" stroke="#f39048" stroke-width="1.6"/>
<path d="M1568,83.5 Q1568.5,89.1 1574,89.1 H1603" fill="none" stroke="#f0843a" stroke-width="1.4" opacity="0.7"/>
<path d="M1583,62.8 H1575 Q1571.8,62.8 1571.8,66 V82 Q1571.8,85.2 1575,85.2 H1591 Q1594.2,85.2 1594.2,82 V73" fill="none" stroke="#2383a8" stroke-width="2.8"/><path d="M1581.8,74.5 L1598,58.5 M1589,57.5 H1599 V67" fill="none" stroke="#2383a8" stroke-width="2.8"/>
<rect x="1567.3" y="110.4" width="36" height="34" rx="6" fill="#f27a24" stroke="#f27a24" stroke-width="1.6"/>
<path d="M1568,139.6 Q1568.5,145.2 1574,145.2 H1603" fill="none" stroke="#f0843a" stroke-width="1.4" opacity="0.7"/>
<text x="1584" y="135.5" font-size="25" fill="#ffffff" font-family="Liberation Serif" font-style="italic" font-weight="bold" text-anchor="middle">i</text>
<rect x="1567.3" y="166.8" width="36" height="34" rx="6" fill="#ffffff" stroke="#f39048" stroke-width="1.6"/>
<path d="M1568,196.0 Q1568.5,201.6 1574,201.6 H1603" fill="none" stroke="#f0843a" stroke-width="1.4" opacity="0.7"/>
<g fill="#2383a8"><rect x="1573.1" y="170.1" width="6.5" height="3.0"/><rect x="1573.1" y="170.1" width="3.0" height="6.5"/><rect x="1588.6" y="170.1" width="6.5" height="3.0"/><rect x="1592.1" y="170.1" width="3.0" height="6.5"/><rect x="1573.1" y="193.7" width="6.5" height="3.0"/><rect x="1573.1" y="190.2" width="3.0" height="6.5"/><rect x="1588.6" y="193.7" width="6.5" height="3.0"/><rect x="1592.1" y="190.2" width="3.0" height="6.5"/><rect x="1582.6" y="170.1" width="3.0" height="3.0"/><rect x="1582.6" y="193.7" width="3.0" height="3.0"/><rect x="1573.1" y="178.9" width="3.0" height="3.0"/><rect x="1573.1" y="184.9" width="3.0" height="3.0"/><rect x="1592.1" y="178.9" width="3.0" height="3.0"/><rect x="1592.1" y="184.9" width="3.0" height="3.0"/></g>
<rect x="1567.3" y="222.8" width="36" height="34" rx="6" fill="#ffffff" stroke="#f39048" stroke-width="1.6"/>
<path d="M1568,252.0 Q1568.5,257.6 1574,257.6 H1603" fill="none" stroke="#f0843a" stroke-width="1.4" opacity="0.7"/>
<g transform="translate(1584,238) rotate(-45)" fill="none" stroke="#2383a8" stroke-width="2.4"><rect x="-15" y="-5.5" width="30" height="11"/><path d="M-9,5.5 V0.5 M-4.5,5.5 V2 M0,5.5 V0.5 M4.5,5.5 V2 M9,5.5 V0.5" stroke-width="1.8"/></g>
<rect x="1567.3" y="278.1" width="36" height="34" rx="6" fill="#ffffff" stroke="#f39048" stroke-width="1.6"/>
<path d="M1568,307.3 Q1568.5,312.9 1574,312.9 H1603" fill="none" stroke="#f0843a" stroke-width="1.4" opacity="0.7"/>
<path d="M1578.2,283.3 V288.8 H1572.7 M1590,283.3 V288.8 H1597 M1578.2,304.8 V299.3 H1572.7 M1590,304.8 V299.3 H1597" fill="none" stroke="#2383a8" stroke-width="2.8"/>
<rect x="1567.3" y="334.6" width="36" height="34" rx="6" fill="#ffffff" stroke="#f39048" stroke-width="1.6"/>
<path d="M1568,363.8 Q1568.5,369.4 1574,369.4 H1603" fill="none" stroke="#f0843a" stroke-width="1.4" opacity="0.7"/>
<path d="M1575.3,349.4 H1591.7 M1583.5,341.2 V357.6" stroke="#2383a8" stroke-width="3.2"/>
<rect x="1567.3" y="390.7" width="36" height="34" rx="6" fill="#ffffff" stroke="#f39048" stroke-width="1.6"/>
<path d="M1568,419.9 Q1568.5,425.5 1574,425.5 H1603" fill="none" stroke="#f0843a" stroke-width="1.4" opacity="0.7"/>
<path d="M1575.3,405.9 H1591.7" stroke="#2383a8" stroke-width="3.2"/>
<rect x="1567.3" y="446.0" width="36" height="34" rx="6" fill="#ffffff" stroke="#f39048" stroke-width="1.6"/>
<path d="M1568,475.2 Q1568.5,480.8 1574,480.8 H1603" fill="none" stroke="#f0843a" stroke-width="1.4" opacity="0.7"/>
<path d="M1572.5,457 V451.8 H1577.7 M1590.5,451.8 H1595.7 V457 M1572.5,466.8 V472 H1577.7 M1590.5,472 H1595.7 V466.8" fill="none" stroke="#2383a8" stroke-width="2.6"/><circle cx="1584.1" cy="461.9" r="4.6" fill="none" stroke="#2383a8" stroke-width="2.4"/><circle cx="1584.1" cy="461.9" r="1.4" fill="#2383a8"/>
<rect x="1522.8" y="384.3" width="35.2" height="34" fill="#ffffff"/>
<path d="M1558,384.3 H1522.8 V418.3 H1558" fill="none" stroke="#f2a070" stroke-width="1.2"/>
<path d="M1530.8,394.6 L1537.3,401.3 L1530.8,408 M1539.3,394.6 L1545.8,401.3 L1539.3,408" fill="none" stroke="#4a5864" stroke-width="2.7"/>

</svg>
<div id="frame"></div>
</body></html>
